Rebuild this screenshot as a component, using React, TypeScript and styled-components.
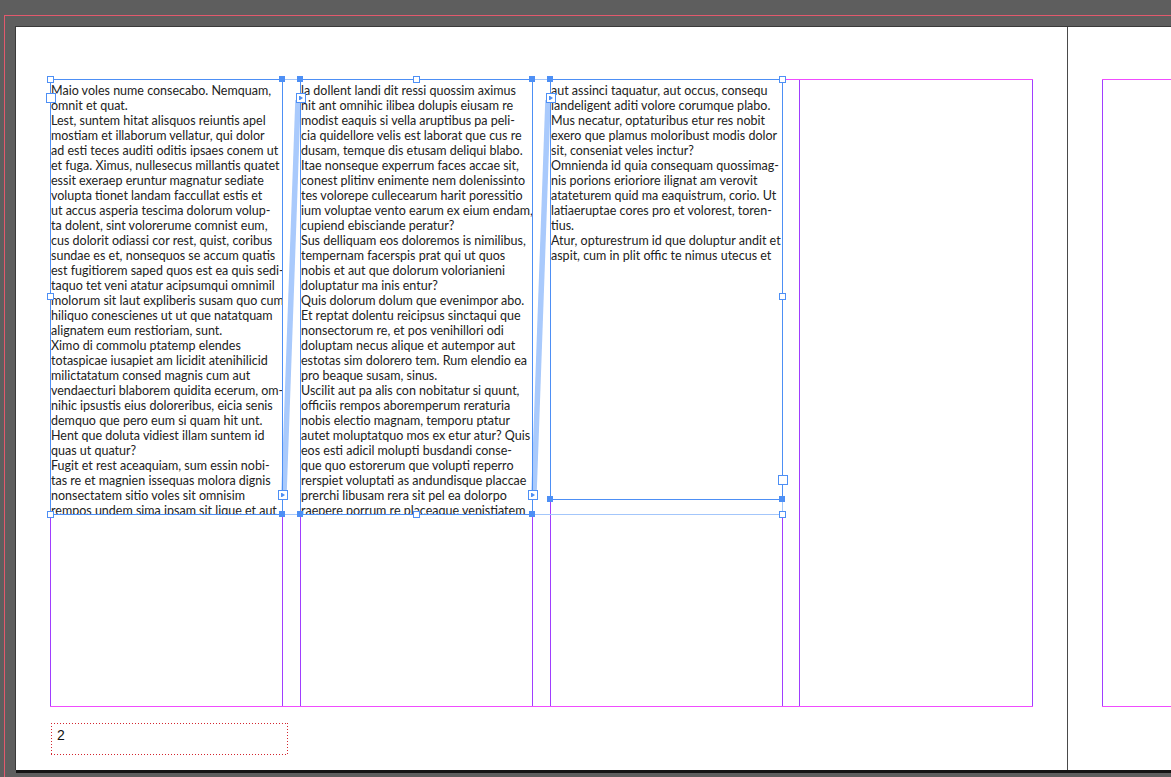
import styled, { createGlobalStyle } from "styled-components";

const GlobalStyle = createGlobalStyle`
  html, body {
    margin: 0;
    padding: 0;
    background: #5e5e5e;
  }
`

const FRAME_BLUE = "#4d8ff5"
const GROUP_BLUE = "#a3c6fb"
const THREAD_BLUE = "#a9cafc"
const MAGENTA = "#f04cff"
const VIOLET = "#a03eff"

const Pasteboard = styled.div`
  width: 1171px;
  height: 777px;
  overflow: hidden;
  background: #5e5e5e;
  padding: 26px 0 0 15px;
  box-sizing: border-box;
`

const Spread = styled.div`
  display: flex;
  width: max-content;
  border-top: 1px solid #3a3a3a;
  border-left: 1px solid #3a3a3a;
  outline: 1px solid #e2596d;
  outline-offset: 10px;
  box-shadow: 1px 3px 0 #141414;
`

const Page = styled.div<{ $spine?: boolean }>`
  flex-shrink: 0;
  width: 1017px;
  height: 691px;
  background: #fff;
  padding: 52px 0 0 34px;
  box-sizing: content-box;
  border-right: ${(p) => (p.$spine ? "1px solid #4a4a4a" : "none")};
`

const MarginBox = styled.div`
  position: relative;
  width: 983px;
  height: 628px;
  box-sizing: border-box;
  border-top: 1px solid ${MAGENTA};
  border-bottom: 1px solid ${MAGENTA};
  display: grid;
  grid-template-columns: repeat(4, 233px);
  column-gap: 17px;
`

const ColumnGuide = styled.div<{ $pull?: boolean }>`
  border-left: 1px solid ${VIOLET};
  border-right: 1px solid ${VIOLET};
  margin-left: ${(p) => (p.$pull ? "-1px" : "0")};
`

const FrameLayer = styled.div`
  position: absolute;
  top: -1px;
  left: 0;
  width: 983px;
  display: grid;
  grid-template-columns: repeat(4, 233px);
  column-gap: 17px;
  align-items: start;
`

const GroupBox = styled.div`
  position: absolute;
  top: 0;
  left: 0;
  width: 733px;
  height: 436px;
  box-sizing: border-box;
  border: 1px solid ${GROUP_BLUE};
`

const ThreadLines = styled.svg`
  position: absolute;
  top: 0;
  left: 0;
  width: 733px;
  height: 436px;
  overflow: visible;
`

const Frame = styled.div<{ $h: number }>`
  position: relative;
  height: ${(p) => p.$h}px;
  box-sizing: border-box;
  border: 1px solid ${FRAME_BLUE};
`

const TextArea = styled.div`
  height: 100%;
  overflow: hidden;
  padding-top: 3px;
  box-sizing: border-box;
  font-family: Lato, "Liberation Sans", sans-serif;
  font-size: 12.5px;
  line-height: 15px;
  color: #222;
`

const Line = styled.div`
  white-space: nowrap;
`

const Port = styled.div<{ $side: "in" | "out" }>`
  position: absolute;
  width: 10px;
  height: 10px;
  box-sizing: border-box;
  border: 1px solid ${FRAME_BLUE};
  background: #fff;
  left: ${(p) => (p.$side === "in" ? "-5px" : "auto")};
  right: ${(p) => (p.$side === "out" ? "-6px" : "auto")};
  top: ${(p) => (p.$side === "in" ? "13px" : "auto")};
  bottom: ${(p) => (p.$side === "out" ? "14px" : "auto")};
  display: flex;
  align-items: center;
  justify-content: center;
`

const PortArrow = styled.span`
  width: 0;
  height: 0;
  margin-left: 1px;
  border-left: 3px solid ${FRAME_BLUE};
  border-top: 2.5px solid transparent;
  border-bottom: 2.5px solid transparent;
  box-shadow: -1px 0 0 ${FRAME_BLUE};
`

const Handle = styled.div<{ $solid?: boolean }>`
  position: absolute;
  width: ${(p) => (p.$solid ? 6 : 7)}px;
  height: ${(p) => (p.$solid ? 6 : 7)}px;
  margin: -3px 0 0 -3px;
  box-sizing: border-box;
  border: 1px solid ${FRAME_BLUE};
  background: ${(p) => (p.$solid ? FRAME_BLUE : "#fff")};
`

const PageNumber = styled.div`
  margin: 16px 0 0 1px;
  width: 237px;
  height: 32px;
  box-sizing: border-box;
  padding: 4px 0 0 6px;
  font-family: "Liberation Sans", Arial, sans-serif;
  font-size: 14px;
  line-height: 16px;
  color: #111;
  background:
    linear-gradient(to right, #d3262f 1px, transparent 1px) top left / 3px 1px repeat-x,
    linear-gradient(to right, #d3262f 1px, transparent 1px) bottom left / 3px 1px repeat-x,
    linear-gradient(to bottom, #d3262f 1px, transparent 1px) top left / 1px 3px repeat-y,
    linear-gradient(to bottom, #d3262f 1px, transparent 1px) top right / 1px 3px repeat-y;
`

const col1 = [
  "Maio voles nume consecabo. Nemquam,",
  "omnit et quat.",
  "Lest, suntem hitat alisquos reiuntis apel",
  "mostiam et illaborum vellatur, qui dolor",
  "ad esti teces auditi oditis ipsaes conem ut",
  "et fuga. Ximus, nullesecus millantis quatet",
  "essit exeraep eruntur magnatur sediate",
  "volupta tionet landam faccullat estis et",
  "ut accus asperia tescima dolorum volup-",
  "ta dolent, sint volorerume comnist eum,",
  "cus dolorit odiassi cor rest, quist, coribus",
  "sundae es et, nonsequos se accum quatis",
  "est fugitiorem saped quos est ea quis sedi-",
  "taquo tet veni atatur acipsumqui omnimil",
  "molorum sit laut expliberis susam quo cum",
  "hiliquo conescienes ut ut que natatquam",
  "alignatem eum restioriam, sunt.",
  "Ximo di commolu ptatemp elendes",
  "totaspicae iusapiet am licidit atenihilicid",
  "milictatatum consed magnis cum aut",
  "vendaecturi blaborem quidita ecerum, om-",
  "nihic ipsustis eius doloreribus, eicia senis",
  "demquo que pero eum si quam hit unt.",
  "Hent que doluta vidiest illam suntem id",
  "quas ut quatur?",
  "Fugit et rest aceaquiam, sum essin nobi-",
  "tas re et magnien issequas molora dignis",
  "nonsectatem sitio voles sit omnisim",
  "rempos undem sima ipsam sit lique et aut",
]

const col2 = [
  "la dollent landi dit ressi quossim aximus",
  "nit ant omnihic ilibea dolupis eiusam re",
  "modist eaquis si vella aruptibus pa peli-",
  "cia quidellore velis est laborat que cus re",
  "dusam, temque dis etusam deliqui blabo.",
  "Itae nonseque experrum faces accae sit,",
  "conest plitinv enimente nem dolenissinto",
  "tes volorepe cullecearum harit poressitio",
  "ium voluptae vento earum ex eium endam,",
  "cupiend ebisciande peratur?",
  "Sus delliquam eos doloremos is nimilibus,",
  "tempernam facerspis prat qui ut quos",
  "nobis et aut que dolorum volorianieni",
  "doluptatur ma inis entur?",
  "Quis dolorum dolum que evenimpor abo.",
  "Et reptat dolentu reicipsus sinctaqui que",
  "nonsectorum re, et pos venihillori odi",
  "doluptam necus alique et autempor aut",
  "estotas sim dolorero tem. Rum elendio ea",
  "pro beaque susam, sinus.",
  "Uscilit aut pa alis con nobitatur si quunt,",
  "officiis rempos aboremperum reraturia",
  "nobis electio magnam, temporu ptatur",
  "autet moluptatquo mos ex etur atur? Quis",
  "eos esti adicil molupti busdandi conse-",
  "que quo estorerum que volupti reperro",
  "rerspiet voluptati as andundisque placcae",
  "prerchi libusam rera sit pel ea dolorpo",
  "raepere porrum re placeaque venistiatem",
]

const col3 = [
  "aut assinci taquatur, aut occus, consequ",
  "iandeligent aditi volore corumque plabo.",
  "Mus necatur, optaturibus etur res nobit",
  "exero que plamus moloribust modis dolor",
  "sit, conseniat veles inctur?",
  "Omnienda id quia consequam quossimag-",
  "nis porions erioriore ilignat am verovit",
  "atateturem quid ma eaquistrum, corio. Ut",
  "latiaeruptae cores pro et volorest, toren-",
  "tius.",
  "Atur, opturestrum id que doluptur andit et",
  "aspit, cum in plit offic te nimus utecus et",
]

const hollowHandles = [
  [0, 0], [366, 0], [732, 0],
  [0, 217], [732, 217],
  [0, 435], [366, 435], [732, 435],
]

const solidHandles = [
  [232, 0], [250, 0], [482, 0], [500, 0],
  [232, 435], [250, 435], [482, 435],
  [500, 420], [732, 420],
]

const TextFrame = ({ lines, height, inArrow, outArrow }: { lines: string[]; height: number; inArrow: boolean; outArrow: boolean }) => (
  <Frame $h={height}>
    <TextArea>
      {lines.map((l, i) => (
        <Line key={i}>{l}</Line>
      ))}
    </TextArea>
    <Port $side="in">{inArrow && <PortArrow />}</Port>
    <Port $side="out">{outArrow && <PortArrow />}</Port>
  </Frame>
)

const Columns = () => (
  <>
    <ColumnGuide />
    <ColumnGuide />
    <ColumnGuide />
    <ColumnGuide $pull />
  </>
)

export default function App() {
  return (
    <>
      <GlobalStyle />
      <Pasteboard>
        <Spread>
          <Page $spine>
            <MarginBox>
              <Columns />
              <FrameLayer>
                <GroupBox />
                <ThreadLines viewBox="0 0 733 436">
                  <line x1={248} y1={21} x2={234} y2={414} stroke={THREAD_BLUE} strokeWidth={5.5} />
                  <line x1={498} y1={21} x2={484} y2={414} stroke={THREAD_BLUE} strokeWidth={5.5} />
                </ThreadLines>
                <TextFrame lines={col1} height={436} inArrow={false} outArrow />
                <TextFrame lines={col2} height={436} inArrow outArrow />
                <TextFrame lines={col3} height={421} inArrow outArrow={false} />
                {hollowHandles.map(([x, y], i) => (
                  <Handle key={"h" + i} style={{ left: x, top: y }} />
                ))}
                {solidHandles.map(([x, y], i) => (
                  <Handle key={"s" + i} $solid style={{ left: x, top: y }} />
                ))}
              </FrameLayer>
            </MarginBox>
            <PageNumber>2</PageNumber>
          </Page>
          <Page>
            <MarginBox>
              <Columns />
            </MarginBox>
          </Page>
        </Spread>
      </Pasteboard>
    </>
  )
}
